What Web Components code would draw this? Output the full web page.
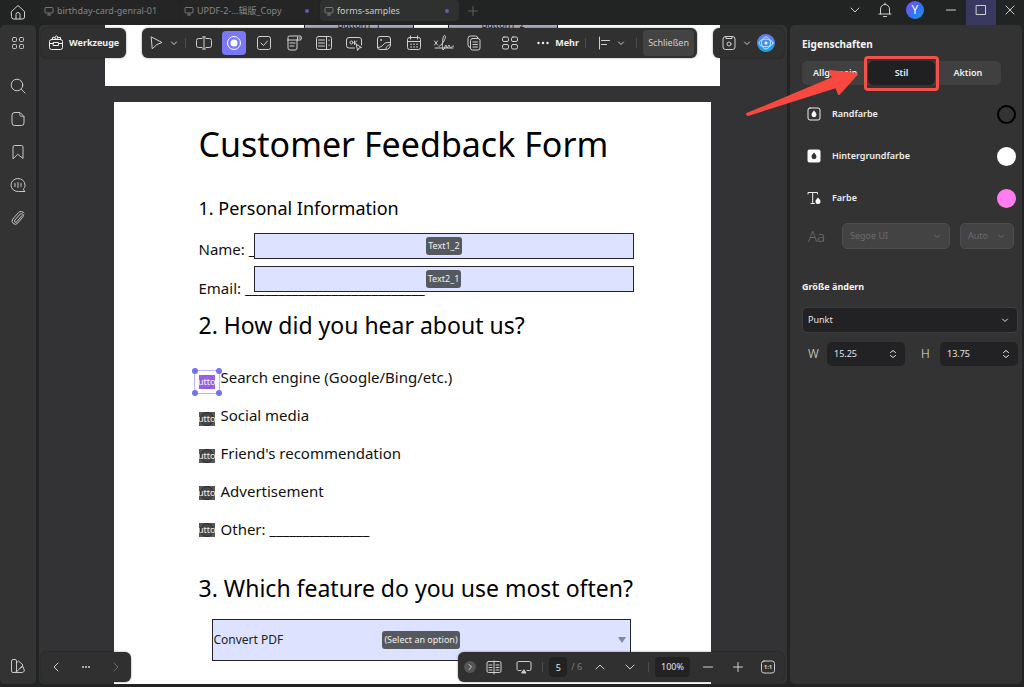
<!DOCTYPE html>
<html lang="de">
<head>
<meta charset="utf-8">
<title>forms-samples</title>
<style>
  html, body { margin: 0; height: 100%; }
  body {
    background: #222423;
    color: #e4e4e4;
    font: 9px/12px "Noto Sans", "Open Sans", "Noto Sans CJK SC", sans-serif;
    overflow: hidden;
  }
</style>
</head>
<body>
<pdf-app></pdf-app>

<script>
"use strict";
(() => {
  // icons, stroked with currentColor unless noted
  var ICONS = {
    home: [16, `<path d="M1.500 7.500 8 1.500l6.500 6v5.500a2 2 0 0 1-2 2h-9a2 2 0 0 1-2-2z"/><path d="M6 15v-4.500a2 2 0 0 1 4 0V15"/>`],
    screen: [10, `<rect x="1" y="1.500" width="8" height="5.500" rx="1"/><path d="M5 7v2M3.500 9h3"/>`],
    plus: [10, `<path d="M5 .5v9M.5 5h9"/>`],
    minus: [10, `<path d="M.5 5h9"/>`],
    chevron: [10, `<path d="M1 3l4 4 4-4"/>`],
    chevronUp: [10, `<path d="M1 7l4-4 4 4"/>`],
    chevronLeft: [10, `<path d="M7 1 3 5l4 4"/>`],
    chevronRight: [10, `<path d="M3 1l4 4-4 4"/>`],
    small: [6, `<path d="M.5 2 3 4.500 5.500 2"/>`],
    bell: [16, `<path d="M2 12h12M3.500 12V7a4.500 4.500 0 0 1 9 0v5M8 2.500V1M6.500 14.500h3"/>`],
    max: [12, `<rect x="1.500" y="1.500" width="9" height="9"/>`],
    close: [10, `<path d="M1 1l8 8M9 1 1 9"/>`],
    grid: [14, `<rect x="1.500" y="1.500" width="4" height="4" rx="1"/><rect x="8.500" y="1.500" width="4" height="4" rx="1"/><rect x="1.500" y="8.500" width="4" height="4" rx="1"/><rect x="8.500" y="8.500" width="4" height="4" rx="1"/>`],
    search: [16, `<circle cx="7" cy="7" r="5.800"/><path d="M11.500 11.500l3.500 3.500"/>`],
    page: [16, `<path d="M4.500 1.500H10l4 4v6.500a2.500 2.500 0 0 1-2.500 2.500h-7A2.500 2.500 0 0 1 2 12V4a2.500 2.500 0 0 1 2.500-2.500z"/><path d="M9.500 1.500c1 1.500-.5 3 1 3.500s2 0 3.500.8"/>`],
    bookmark: [16, `<path d="M3 14.500V3a1.500 1.500 0 0 1 1.500-1.500h7A1.500 1.500 0 0 1 13 3v11.500L8 10.500z"/>`],
    comment: [16, `<path d="M14.500 14.500H8.500A7 6.500 0 1 1 15 8c0 2-.8 3.500-1.500 4z"/><path d="M5 6.500v3M8 5.500v5M11 6.500v3"/>`],
    clip: [16, `<path d="M12 5.500 6.800 11.800a1.300 1.300 0 0 1-2-1.700L10.200 4a2 2 0 0 1 3 2.500L7.800 13a3.200 3.200 0 0 1-5-4L8.500 2.500a3.500 3.500 0 0 1 5.500.5"/>`],
    swatches: [16, `<rect x="1.500" y="1.500" width="5" height="13" rx="1.500"/><path d="M6.500 5 8.500 3l4.500 4-6.500 7M10.500 10l2.500-1.500 1.500 4.500-2 1.500h-7"/>`],
    toolbox: [16, `<rect x="1.500" y="4.500" width="13" height="10" rx="2"/><path d="M1.500 8.500h4M10.500 8.500h4M5.500 7.500h5v3h-5zM4 4.500 5 2l2 1M12.500 4.500v-2h-2"/><circle cx="8.500" cy="2.500" r="1.500"/>`],
    cursor: [16, `<path d="M2.500 2 13 7.500 8 9.500l-4.500 4z"/>`],
    textField: [18, `<path d="M7 4.500H3.500a2 2 0 0 0-2 2v5a2 2 0 0 0 2 2H7M11 4.500h3.500a2 2 0 0 1 2 2v5a2 2 0 0 1-2 2H11M9 3v12M7.500 3h3M7.500 15h3"/>`],
    radio: [16, `<circle cx="8" cy="8" r="6.500"/><circle cx="8" cy="8" r="3.500" fill="#fff" stroke="none"/>`],
    check: [16, `<rect x="1.500" y="1.500" width="13" height="13" rx="2"/><path d="M5 8l2.500 2.500L11.500 6"/>`],
    dropdown: [18, `<path d="M3 6V3.500A1.500 1.500 0 0 1 4.500 2H15a1.500 1.500 0 0 1 1.500 1.500v1A1.500 1.500 0 0 1 15 6H3zM3 6v8a2 2 0 0 0 2 2h5a2 2 0 0 0 2-2V6M5 9h5M5 12h4M12.500 3v3M14 4h1.500"/>`],
    list: [18, `<rect x="1.500" y="2.500" width="15" height="13" rx="2"/><path d="M11.500 2.500v13M3.500 6h6M3.500 9h6M3.500 12h6M14 6v.5M14 11v.5"/>`],
    okButton: [18, `<path d="M9.500 14H4a2.500 2.500 0 0 1-2.500-2.500V6A2.500 2.500 0 0 1 4 3.500h10A2.500 2.500 0 0 1 16.500 6v5"/><circle cx="6.500" cy="8.500" r="1.500"/><path d="M9.500 7v3.500M11.500 7l-1.500 1.700 1.500 1.500M11.500 10.500l5 3-2.500.5-1.200 2.200z"/>`],
    image: [16, `<path d="M10 14.500H4a2.500 2.500 0 0 1-2.500-2.500V4A2.500 2.500 0 0 1 4 1.500h8A2.500 2.500 0 0 1 14.500 4v5M1.500 12.500c6 0 5.500-5 10-5h3M10 14.500c-.5-4 3-4 4.500-5.500 0 3-1.500 5.500-4.500 5.500z"/><circle cx="5" cy="5" r=".5"/>`],
    calendar: [16, `<rect x="1.500" y="2.500" width="13" height="12" rx="2"/><path d="M1.500 6.500h13M4.500 1v3M11.500 1v3"/><path d="M5 9.300h.1M8 9.300h.1M11 9.300h.1M5 12h.1M8 12h.1M11 12h.1" stroke-width="1.500"/>`],
    sign: [20, `<path d="M.5 8l3 4M3.500 8l-3 4M5 13.500c5-3 8-11 5.500-11S8 17.500 9 17c2-1 2-5 3-5s0 3 1 3 1-3 2-3 0 2.500 1.500 2.500 1-1.500 3-1.500M1 15h18"/>`],
    copy: [16, `<path d="M4.500 12.500A2.500 2.500 0 0 1 2 10V3.500A2.500 2.500 0 0 1 4.500 1h5A2.500 2.500 0 0 1 12 3"/><rect x="4.500" y="3.500" width="9.500" height="11.500" rx="2"/><path d="M7 7h4.500M7 9.500h4.500M7 12h4.500"/>`],
    fields: [18, `<rect x="1.500" y="3" width="6" height="4.500" rx="1.500"/><rect x="10.500" y="3" width="6" height="4.500" rx="1.500"/><rect x="1.500" y="10.500" width="6" height="4.500" rx="1.500"/><rect x="10.500" y="10.500" width="6" height="4.500" rx="1.500"/>`],
    dots: [14, `<g fill="currentColor" stroke="none"><circle cx="2.500" cy="7" r="1.200"/><circle cx="7" cy="7" r="1.200"/><circle cx="11.500" cy="7" r="1.200"/></g>`],
    dotsSmall: [10, `<g fill="currentColor" stroke="none"><circle cx="2" cy="5" r="1"/><circle cx="5" cy="5" r="1"/><circle cx="8" cy="5" r="1"/></g>`],
    align: [12, `<path d="M1.500 0v12M3.500 3.500h8M3.500 7.500h5"/>`],
    save: [16, `<rect x="2" y="1.500" width="12" height="13" rx="2.500"/><path d="M5 1.500v2h6v-2"/><circle cx="8" cy="9" r="2"/>`],
    ai: [18, `<defs><linearGradient id="g" x1="0" y1="0" x2="0" y2="1"><stop offset="0" stop-color="#6a7bf5"/><stop offset="1" stop-color="#16a6dd"/></linearGradient></defs><circle cx="9" cy="9" r="9" fill="url(#g)" stroke="none"/><g stroke="#bfe2ff"><ellipse cx="9" cy="9" rx="7" ry="3.800"/><ellipse cx="9" cy="9" rx="4.500" ry="6"/></g><circle cx="9" cy="9" r="1.500" fill="#fff" stroke="none"/>`],
    spread: [16, `<rect x="1" y="2.500" width="14" height="11" rx="1.500"/><path d="M8 2v13M3 6h3M3 8.500h3M3 11h3M10 6h3M10 8.500h3M10 11h3"/>`],
    present: [16, `<path d="M5 11.500H3A1.500 1.500 0 0 1 1 10V4a1.500 1.500 0 0 1 1.500-1.500h11A1.500 1.500 0 0 1 15 4v6a1.500 1.500 0 0 1-1.500 1.500H11"/><path fill="currentColor" d="M8 11l2 3H6z"/>`],
    fit: [16, `<rect x="1.500" y="2" width="13" height="12" rx="2.500"/><text x="8" y="10" text-anchor="middle" font-size="6" font-weight="700" fill="currentColor" stroke="none">1:1</text>`],
    dropLine: [14, `<rect x="1" y="1" width="12" height="12" rx="2"/><path fill="#fff" stroke="none" d="M7 3.500c1.500 1.800 2.500 3 2.500 4.200a2.500 2.500 0 0 1-5 0C4.500 6.500 5.500 5.300 7 3.500z"/>`],
    dropFill: [14, `<rect x=".5" y=".5" width="13" height="13" rx="2" fill="#fff" stroke="none"/><path fill="#333" stroke="none" d="M7 3.500c1.500 1.800 2.500 3 2.500 4.200a2.500 2.500 0 0 1-5 0C4.500 6.500 5.500 5.300 7 3.500z"/>`],
    textColor: [14, `<path d="M1 3V1.500h9.500V3M5.700 1.500v11M4 12.500h3.500"/><path fill="#fff" stroke="none" d="M11 6.500c1.500 1.800 2.500 2.800 2.500 4a2.500 2.500 0 0 1-5 0c0-1.200 1-2.200 2.500-4z"/>`],
    stepper: [8, `<path d="M1.500 2.500 4 .5l2.500 2M1.500 5.500 4 7.500l2.500-2"/>`, 12, "0 -2 8 12"]
  };

  var BUTTON = `
    button {
      display: inline-flex; align-items: center; justify-content: center; gap: 5px;
      margin: 0; padding: 0; border: 0; background: none; color: inherit; font: inherit;
    }
  `;

  class BaseElement extends HTMLElement {
    constructor() {
      super();
      this.attachShadow({ mode: "open" });
    }
    connectedCallback() {
      this.shadowRoot.innerHTML = `<style>${this.styles}</style>${this.markup}`;
    }
  }

  // <ui-icon name="home">
  customElements.define("ui-icon", class extends BaseElement {
    get markup() {
      const [size, body] = ICONS[this.getAttribute("name")];
      return `<svg width="${size}" height="${size}" viewBox="0 0 ${size} ${size}" fill="none"
        stroke="currentColor" stroke-linecap="round" stroke-linejoin="round" aria-hidden="true">${body}</svg>`;
    }
    get styles() {
      return `:host { display: inline-flex; flex: none; } svg { display: block; overflow: visible; }`;
    }
  });

  // icon button; "active" fills it with the accent colour
  customElements.define("tool-button", class extends BaseElement {
    get markup() {
      return `<button type="button" aria-label="${this.getAttribute("label") || ""}">
        <ui-icon name="${this.getAttribute("icon")}"></ui-icon></button>`;
    }
    get styles() {
      return `
        :host { display: block; flex: none; width: 24px; height: 24px; }
        :host([narrow]) { width: 10px; }
        :host([dim]) { opacity: .35; }
        ${BUTTON}
        button { width: 100%; height: 100%; border-radius: 4px; }
        :host([active]) button { background: #7b78f7; color: #fff; }
      `;
    }
  });

  customElements.define("tool-group", class extends BaseElement {
    get markup() { return `<slot></slot>`; }
    get styles() {
      return `
        :host {
          display: flex; align-items: center; gap: 6px; box-sizing: border-box; height: 30px;
          padding: 0 3px; border-radius: 6px; background: #303031; color: #d0d0d0;
          box-shadow: 0 0 2px rgba(0, 0, 0, .5);
        }
      `;
    }
  });

  customElements.define("tool-divider", class extends BaseElement {
    get markup() { return ``; }
    get styles() { return `:host { display: block; flex: none; width: 1px; height: 10px; background: #4c4c4c; }`; }
  });

  customElements.define("doc-tab", class extends BaseElement {
    get markup() {
      return `<button type="button"><ui-icon name="screen"></ui-icon><span><slot></slot></span></button><i></i>`;
    }
    get styles() {
      return `
        :host {
          display: flex; align-items: center; justify-content: space-between; box-sizing: border-box;
          flex: 0 1 139px; height: 21px; padding: 0 10px 0 4px; border-radius: 4px;
          color: #868686; background: #242524;
        }
        :host([active]) { background: #2f3030; color: #c8c8c8; }
        ${BUTTON}
        button { gap: 3px; white-space: nowrap; }
        ui-icon { color: #777; }
        i { width: 4px; height: 4px; border-radius: 50%; }
        :host([changed]) i { background: #625cb5; }
      `;
    }
  });

  customElements.define("title-bar", class extends BaseElement {
    get markup() {
      return `
        <tool-button icon="home" label="Start"></tool-button>
        <nav>
          <doc-tab>birthday-card-genral-01</doc-tab>
          <doc-tab changed>UPDF-2-...辑版_Copy</doc-tab>
          <doc-tab active changed>forms-samples</doc-tab>
          <tool-button icon="plus" label="Neuer Tab" dim></tool-button>
        </nav>
        <div class="window">
          <tool-button icon="chevron" label="Tabs"></tool-button>
          <tool-button icon="bell" label="Mitteilungen"></tool-button>
          <button type="button" class="avatar">Y</button>
          <button type="button" aria-label="Minimieren"><ui-icon name="minus"></ui-icon></button>
          <button type="button" class="max" aria-label="Maximieren"><ui-icon name="max"></ui-icon></button>
          <button type="button" class="quit" aria-label="Beenden"><ui-icon name="close"></ui-icon></button>
        </div>
      `;
    }
    get styles() {
      return `
        :host { display: flex; align-items: center; height: 25px; padding-left: 6px; background: #222423; color: #d0d0d0; overflow: hidden; }
        ${BUTTON}
        :host > tool-button { align-self: flex-start; }
        nav { display: flex; flex: 1; gap: 1px; align-items: center; align-self: flex-start; margin-left: 10px; }
        nav tool-button { height: 21px; margin-left: 1px; }
        .window { display: flex; align-items: center; align-self: flex-start; height: 20px; }
        .window tool-button { margin-right: 6px; height: 20px; }
        .window button { width: 30px; height: 20px; }
        .window .avatar {
          width: 18px; height: 18px; margin: 0 12px 0 3px; border-radius: 50%; color: #fff;
          font-size: 12px; background: linear-gradient(135deg, #8a4cf0, #2f74f5 60%, #12a3dd);
        }
        .window .max { align-self: flex-start; box-sizing: border-box; height: 25px; padding-bottom: 5px; background: #393860; }
        .window .quit { width: 28px; }
      `;
    }
  });

  customElements.define("side-rail", class extends BaseElement {
    get markup() {
      return `
        <tool-button icon="grid" label="Miniaturen"></tool-button>
        <div>
          <tool-button icon="search" label="Suchen"></tool-button>
          <tool-button icon="page" label="Seiten"></tool-button>
          <tool-button icon="bookmark" label="Lesezeichen"></tool-button>
          <tool-button icon="comment" label="Kommentare"></tool-button>
          <tool-button icon="clip" label="Anhänge"></tool-button>
        </div>
        <tool-button icon="swatches" label="Design"></tool-button>
      `;
    }
    get styles() {
      return `
        :host {
          display: flex; flex-direction: column; align-items: center; box-sizing: border-box;
          width: 36px; padding: 6px 0; border-radius: 5px; background: #333; color: #c8c8c8;
        }
        div { display: flex; flex-direction: column; gap: 9px; flex: 1; margin-top: 19px; }
      `;
    }
  });

  // text field placed on a page, with its name on a badge
  customElements.define("form-field", class extends BaseElement {
    get markup() {
      const name = this.getAttribute("name");
      return `<input type="text" aria-label="${name}"><span>${name}</span>`;
    }
    get styles() {
      return `
        :host { display: grid; place-items: center; box-sizing: border-box; height: 26px; background: #dce2ff; border: 1px solid #23242e; }
        input { grid-area: 1 / 1; box-sizing: border-box; width: 100%; height: 100%; border: 0; padding: 0 2px; background: none; }
        span {
          grid-area: 1 / 1; padding: 3px 2px; border-radius: 3px;
          background: #55585e; color: #f1f1f1; font-size: 9px; line-height: 12px;
        }
      `;
    }
  });

  customElements.define("feedback-page", class extends BaseElement {
    get markup() {
      const options = ["Search engine (Google/Bing/etc.)", "Social media", "Friend's recommendation", "Advertisement", "Other: _______________"];
      return `
        <h1>Customer Feedback Form</h1>
        <h2>1. Personal Information</h2>
        <div class="name"><span>Name: _</span><form-field name="Text1_2"></form-field></div>
        <div class="email"><span>Email: ___________________________</span><form-field name="Text2_1"></form-field></div>
        <h2 class="big">2. How did you hear about us?</h2>
        <div class="options">
          <div class="marks">
            ${options.map((o, i) => `<div class="mark${i ? "" : " selected"}">
              <input type="radio" name="source" id="o${i}"><span>Button</span>
              ${i ? "" : "<b></b><b></b><b></b><b></b>"}
            </div>`).join("")}
          </div>
          <div class="labels">${options.map((o, i) => `<label for="o${i}">${o}</label>`).join("")}</div>
        </div>
        <h2 class="big">3. Which feature do you use most often?</h2>
        <div class="choice">
          <select aria-label="Feature"><option>Convert PDF</option></select>
          <span>(Select an option)</span>
        </div>
      `;
    }
    get styles() {
      return `
        :host {
          display: block; box-sizing: border-box; width: 597px; padding: 20px 77px 40px 85px;
          background: #fff; color: #111; font-size: 15px; line-height: 20px; white-space: nowrap;
        }
        h1, h2 { margin: 0; font-weight: 400; color: #000; }
        h1 { font-size: 34px; line-height: 44px; }
        h2 { margin-top: 28px; font-size: 18px; line-height: 28px; }
        h2.big { margin-top: 11px; font-size: 23px; line-height: 32px; }
        .options + h2.big { margin-top: 24px; }
        .name { display: flex; align-items: flex-end; margin-top: 11px; }
        .name form-field { flex: 1; margin-left: -1px; z-index: 1; }
        .email { position: relative; margin-top: 7px; padding-top: 12px; }
        /* the field lies over the ruled line */
        .email form-field { position: absolute; top: 0; right: 0; left: 55px; }
        .options { display: flex; margin-top: 17px; }
        .marks { display: grid; gap: 23px; align-content: start; height: 173px; margin-top: 17px; width: 22px; }
        .mark { position: relative; display: grid; place-items: center; width: 16px; height: 14px; background: #565658; }
        .mark input { grid-area: 1 / 1; appearance: none; margin: 0; width: 14px; height: 14px; border: 1px solid #2c2c2e; border-radius: 50%; background: #47474a; }
        .mark span {
          grid-area: 1 / 1; width: 16px; overflow: hidden; display: flex; justify-content: center; z-index: 1;
          color: #f1f1f1; font-size: 9px; line-height: 14px;
        }
        .selected { background: #9a62e6; outline: 1px solid #b9b7f5; outline-offset: 4px; }
        .selected input { border-color: #8d58d8; background: none; }
        /* resize handles */
        b { position: absolute; width: 6px; height: 6px; border-radius: 50%; background: #7673ea; }
        b:nth-of-type(odd) { left: -7px; }
        b:nth-of-type(even) { right: -7px; }
        b:nth-of-type(-n+2) { top: -7px; }
        b:nth-of-type(n+3) { bottom: -7px; }
        .labels { display: flex; flex-direction: column; }
        label { line-height: 38px; }
        .choice { position: relative; display: grid; align-items: center; margin: 15px 3px 0 13px; }
        .choice::after {
          content: ""; position: absolute; right: 5px; border: 4px solid transparent;
          border-top: 6px solid #83879c; border-bottom: 0;
        }
        select {
          grid-area: 1 / 1; appearance: none; width: 100%; height: 42px; padding: 0 1px; border: 1px solid #23242e;
          border-radius: 0; background: #dce2ff; color: #222; font: inherit; font-size: 12px;
        }
        .choice span {
          grid-area: 1 / 1; justify-self: center; padding: 3px 2px; border-radius: 3px;
          background: #55585e; color: #f1f1f1; font-size: 9px; line-height: 12px;
        }
      `;
    }
  });

  customElements.define("doc-canvas", class extends BaseElement {
    get markup() {
      return `
        <div class="pages">
          <div class="previous"><span>Button1_1</span><span>Button1_2</span></div>
          <feedback-page></feedback-page>
        </div>
        <div class="bar top">
          <tool-group class="tools"><button type="button"><ui-icon name="toolbox"></ui-icon>Werkzeuge</button></tool-group>
          <tool-group class="main">
            <tool-button icon="cursor" label="Auswählen"></tool-button>
            <tool-button class="joined" icon="small" label="Mehr Auswahl" narrow></tool-button>
            <tool-divider></tool-divider>
            <tool-button icon="textField" label="Textfeld"></tool-button>
            <tool-button icon="radio" label="Optionsfeld" active></tool-button>
            <tool-button icon="check" label="Kontrollkästchen"></tool-button>
            <tool-button icon="dropdown" label="Dropdown"></tool-button>
            <tool-button icon="list" label="Listenfeld"></tool-button>
            <tool-button icon="okButton" label="Schaltfläche"></tool-button>
            <tool-button icon="image" label="Bild"></tool-button>
            <tool-button icon="calendar" label="Datum"></tool-button>
            <tool-button icon="sign" label="Signatur"></tool-button>
            <tool-button icon="copy" label="Duplizieren"></tool-button>
            <tool-button class="apart" icon="fields" label="Felder"></tool-button>
            <button type="button" class="more"><ui-icon name="dots"></ui-icon>Mehr</button>
            <tool-divider></tool-divider>
            <button type="button" class="align" aria-label="Ausrichten"><ui-icon name="align"></ui-icon><ui-icon name="small"></ui-icon></button>
            <tool-divider></tool-divider>
            <button type="button" class="end">Schließen</button>
          </tool-group>
          <tool-group class="file">
            <button type="button" aria-label="Speichern"><ui-icon name="save"></ui-icon></button>
            <tool-button icon="small" label="Speichern unter" narrow></tool-button>
            <button type="button" aria-label="AI"><ui-icon name="ai"></ui-icon></button>
          </tool-group>
        </div>
        <div class="bar bottom">
          <tool-group class="history">
            <tool-button icon="chevronLeft" label="Zurück"></tool-button>
            <tool-button icon="dotsSmall" label="Mehr"></tool-button>
            <tool-button icon="chevronRight" label="Vor" dim></tool-button>
          </tool-group>
          <tool-group class="view">
            <button type="button" class="fold" aria-label="Einklappen"><ui-icon name="small"></ui-icon></button>
            <tool-button icon="spread" label="Doppelseite"></tool-button>
            <tool-button icon="present" label="Präsentation"></tool-button>
            <tool-divider></tool-divider>
            <span class="count"><input type="text" value="5" aria-label="Seite"> / 6</span>
            <tool-button icon="chevronUp" label="Vorige Seite"></tool-button>
            <tool-button icon="chevron" label="Nächste Seite"></tool-button>
            <tool-divider></tool-divider>
            <button type="button" class="zoom">100%</button>
            <tool-button icon="minus" label="Verkleinern"></tool-button>
            <tool-button icon="plus" label="Vergrößern"></tool-button>
            <tool-button icon="fit" label="Originalgröße"></tool-button>
          </tool-group>
        </div>
      `;
    }
    get styles() {
      return `
        :host { display: block; position: relative; flex: 1; min-width: 0; overflow: hidden; background: #333335; border-radius: 5px; }
        ${BUTTON}
        .pages { display: flex; flex-direction: column; align-items: center; gap: 16px; padding-right: 2px; }
        .previous {
          display: flex; justify-content: center; gap: 34px; box-sizing: border-box; width: 615px; height: 61px;
          padding-left: 38px; background: #fff; color: #111;
        }
        .previous span { width: 108px; height: 5px; overflow: hidden; border: 1px solid #23242e; border-width: 0 1px; background: #a9a8bf; text-align: center; line-height: 0; }
        .bar { position: absolute; right: 3px; left: 2px; display: flex; }
        .top { top: 3px; gap: 16px; }
        .bottom { bottom: 2px; justify-content: space-between; }
        .tools { padding: 0 7px; color: #f0f0f0; font-weight: 700; }
        .main { flex: 1; min-width: 0; }
        .joined { margin-left: -6px; }
        .apart { margin-left: 6px; }
        .more { margin-left: 8px; font-weight: 700; color: #f0f0f0; }
        .align { gap: 8px; padding: 0 6px; }
        .end { height: 26px; margin-left: auto; padding: 0 5px; border-radius: 4px; background: #434344; }
        .file { padding: 0 9px 0 8px; gap: 5px; }
        .history { padding: 0 3px; }
        .view { padding: 0 4px 0 6px; }
        .fold { width: 12px; height: 12px; border-radius: 50%; background: #555; }
        .fold ui-icon { transform: rotate(-90deg); }
        .count { display: flex; align-items: center; gap: 4px; color: #777; }
        .count input { box-sizing: border-box; width: 18px; height: 20px; padding: 0; border: 0; border-radius: 4px; background: #222224; color: #e4e4e4; font: inherit; text-align: center; }
        .zoom { height: 20px; padding: 0 6px; border-radius: 4px; background: #222224; color: #e4e4e4; }
      `;
    }
  });

  customElements.define("color-row", class extends BaseElement {
    get markup() {
      return `<ui-icon name="${this.getAttribute("icon")}"></ui-icon><span id="name"><slot></slot></span>
        <button type="button" aria-labelledby="name"></button>`;
    }
    get styles() {
      return `
        :host { display: flex; align-items: center; gap: 11px; height: 42px; padding: 0 2px 0 5px; font-weight: 600; color: #f0f0f0; }
        span { flex: 1; }
        button { box-sizing: border-box; width: 19px; height: 19px; padding: 0; border: 2px solid var(--line); border-radius: 50%; background: var(--fill); }
      `;
    }
  });

  customElements.define("select-box", class extends BaseElement {
    get markup() {
      return `<select aria-label="${this.getAttribute("label")}" ${this.hasAttribute("disabled") ? "disabled" : ""}>
        <option>${this.getAttribute("value")}</option></select><ui-icon name="small"></ui-icon>`;
    }
    get styles() {
      return `
        :host { display: grid; align-items: center; border-radius: 5px; border: 1px solid #3e3e3f; background: #222224; }
        :host([disabled]) { background: #434344; border-color: #4e4e4f; color: #6c6c6d; }
        select { grid-area: 1 / 1; appearance: none; width: 100%; height: 24px; padding: 0 5px; border: 0; background: none; color: inherit; font: inherit; opacity: 1; }
        :host([disabled]) select { padding: 0 7px; }
        ui-icon { grid-area: 1 / 1; justify-self: end; margin-right: 9px; pointer-events: none; }
      `;
    }
  });

  customElements.define("size-input", class extends BaseElement {
    get markup() {
      return `<label for="value">${this.getAttribute("label")}</label>
        <div><input id="value" type="number" step="0.25" value="${this.getAttribute("value")}"><ui-icon name="stepper"></ui-icon></div>`;
    }
    get styles() {
      return `
        :host { display: flex; align-items: center; gap: 8px; flex: 1; }
        label { width: 11px; font-size: 12px; font-weight: 300; line-height: 16px; }
        div { display: flex; align-items: center; flex: 1; height: 24px; padding: 0 8px 0 7px; border-radius: 5px; background: #222224; }
        input { appearance: textfield; flex: 1; width: 0; min-width: 0; padding: 0; border: 0; background: none; color: inherit; font: inherit; }
        input::-webkit-inner-spin-button { appearance: none; }
      `;
    }
  });

  customElements.define("props-panel", class extends BaseElement {
    get markup() {
      return `
        <h2>Eigenschaften</h2>
        <div class="tabs">
          <button type="button">Allgemein</button>
          <button type="button" class="active">Stil</button>
          <button type="button">Aktion</button>
          <svg width="114" height="52" viewBox="0 0 114 52" aria-hidden="true">
            <path fill="#f8483f" stroke="#f8483f" stroke-width="2" stroke-linejoin="round" d="M2 48 88 12l-3-7 27 3-18 20-3-7L3 49z"/>
          </svg>
        </div>
        <div class="colors">
          <color-row icon="dropLine" style="--line: #000; --fill: transparent">Randfarbe</color-row>
          <color-row icon="dropFill" style="--line: #fff; --fill: #fff">Hintergrundfarbe</color-row>
          <color-row icon="textColor" style="--line: #ff7df0; --fill: #ff7df0">Farbe</color-row>
        </div>
        <div class="font">
          <span>Aa</span>
          <select-box label="Schriftart" value="Segoe UI" disabled></select-box>
          <select-box class="auto" label="Schriftgröße" value="Auto" disabled></select-box>
        </div>
        <h3>Größe ändern</h3>
        <select-box label="Einheit" value="Punkt"></select-box>
        <div class="size">
          <size-input label="W" value="15.25"></size-input>
          <size-input label="H" value="13.75"></size-input>
        </div>
      `;
    }
    get styles() {
      return `
        :host { display: block; position: relative; box-sizing: border-box; width: 232px; padding: 12px 4px 0 12px; border-radius: 5px; background: #333; }
        ${BUTTON}
        h2, h3 { margin: 0; font-weight: 700; line-height: 14px; color: #f4f4f4; }
        h2 { font-size: 10px; }
        h3 { margin: 31px 0 13px; font-size: 9px; }
        .tabs { position: relative; display: flex; margin: 10px 17px 0 0; border-radius: 5px; background: #404041; color: #f0f0f0; }
        .tabs button { flex: 1 1 0; height: 24px; font-weight: 600; border-radius: 5px; }
        .tabs .active { position: relative; background: #202022; }
        /* callout frame round the open tab */
        .active::after { content: ""; position: absolute; inset: -5px -4px -6px; border: 3px solid #f4504c; border-radius: 4px; }
        .tabs svg { position: absolute; top: 5px; left: -57px; pointer-events: none; }
        .colors { margin-top: 8px; }
        .font { display: flex; align-items: center; gap: 10px; margin: 4px 4px 0 6px; }
        .font span { width: 24px; font-size: 15px; font-weight: 300; line-height: 20px; color: #6c6c6d; }
        .font select-box { flex: 1; }
        .font .auto { flex: 0 0 52px; }
        .size { display: flex; gap: 16px; margin: 9px 0 0 6px; }
      `;
    }
  });

  customElements.define("pdf-app", class extends BaseElement {
    get markup() {
      return `
        <title-bar></title-bar>
        <main>
          <side-rail></side-rail>
          <doc-canvas></doc-canvas>
          <props-panel></props-panel>
        </main>
      `;
    }
    get styles() {
      return `
        :host { display: flex; flex-direction: column; height: 100vh; }
        main { display: flex; gap: 3px; flex: 1; min-height: 0; padding: 0 2px 3px 0; }
      `;
    }
  });
})();
</script>
</body>
</html>
